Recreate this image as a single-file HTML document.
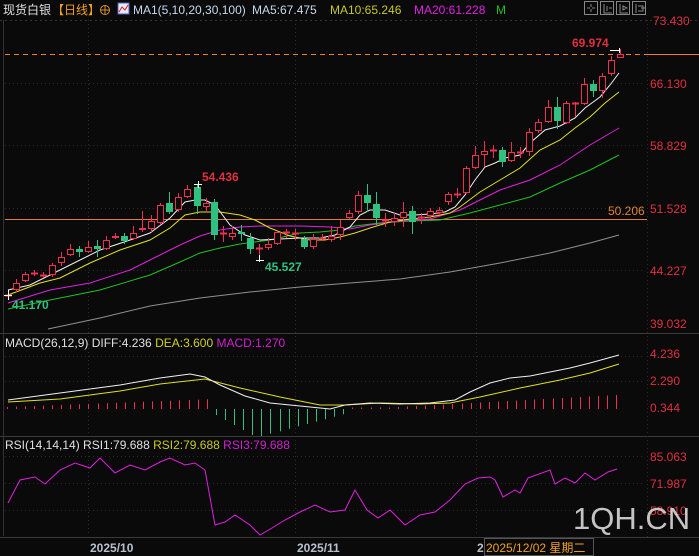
<!DOCTYPE html>
<html><head><meta charset="utf-8"><style>
html,body{margin:0;padding:0;background:#0a0a0a;width:699px;height:556px;overflow:hidden}
svg{display:block}
text{font-family:"Liberation Sans","Noto Sans CJK SC",sans-serif}
</style></head><body>
<svg id="s" width="699" height="556" viewBox="0 0 699 556" xmlns="http://www.w3.org/2000/svg">
<rect width="699" height="556" fill="#0a0a0a"/>
<!-- header -->
<text x="3" y="14" font-size="12" fill="#e0e0e0">现货白银</text>
<text x="52" y="14" font-size="12" fill="#f0a020">【日线】</text>
<circle cx="105" cy="10" r="4.5" fill="none" stroke="#d09030" stroke-width="1"/>
<line x1="100" y1="10" x2="110" y2="10" stroke="#d09030"/><line x1="105" y1="5" x2="105" y2="15" stroke="#d09030"/>
<rect x="118" y="3" width="11" height="11" fill="#e8e8f8" stroke="#5060c0"/>
<polyline points="119,12 122,7 125,10 128,5" fill="none" stroke="#d02020"/>
<text x="133" y="14" font-size="12" fill="#c8d8f0">MA1(5,10,20,30,100)</text>
<text x="252" y="14" font-size="12" fill="#c8d8f0">MA5:67.475</text>
<text x="330" y="14" font-size="12" fill="#c8c820">MA10:65.246</text>
<text x="414" y="14" font-size="12" fill="#e020e0">MA20:61.228</text>
<text x="496" y="14" font-size="12" fill="#20c020">M</text>
<g fill="none" stroke="#888" stroke-width="1">
<rect x="584.5" y="1.5" width="13" height="13"/><rect x="600.5" y="1.5" width="13" height="13"/><rect x="616.5" y="1.5" width="13" height="13"/><rect x="632.5" y="1.5" width="13" height="13"/>
<path d="M591 4v3M591 9v3M587 8h3M592 8h3M604 4v9h8M607 6v5M609 8h3M620 4v9h8M623 6l4 2-4 2zM636 4v9M638 6h5v5h-5M641 8h4"/>
</g>
<line x1="0" y1="20.5" x2="699" y2="20.5" stroke="#333" stroke-dasharray="2,3"/>
<!-- grid -->
<g stroke="#2c2c2c" stroke-dasharray="1,3">
<line x1="5" y1="83.5" x2="645" y2="83.5"/><line x1="5" y1="145.5" x2="645" y2="145.5"/><line x1="5" y1="208.5" x2="645" y2="208.5"/><line x1="5" y1="270.5" x2="645" y2="270.5"/>
<line x1="88.5" y1="20" x2="88.5" y2="536"/><line x1="295.5" y1="20" x2="295.5" y2="536"/><line x1="476.5" y1="20" x2="476.5" y2="536"/>
<line x1="5" y1="381.5" x2="645" y2="381.5"/><line x1="5" y1="356.5" x2="645" y2="356.5"/>
<line x1="5" y1="483.5" x2="645" y2="483.5"/><line x1="5" y1="510.5" x2="645" y2="510.5"/><line x1="5" y1="456.5" x2="645" y2="456.5"/>
</g>
<line x1="3.5" y1="20" x2="3.5" y2="536" stroke="#333"/>
<line x1="0" y1="333.5" x2="699" y2="333.5" stroke="#3a3a3a"/>
<line x1="0" y1="436.5" x2="699" y2="436.5" stroke="#3a3a3a"/>
<line x1="0" y1="537.5" x2="699" y2="537.5" stroke="#3a3a3a"/>
<line x1="647.5" y1="20" x2="647.5" y2="537" stroke="#2a2a2a" stroke-dasharray="1,3"/>
<!-- right labels -->
<g font-size="12" fill="#e03040">
<text x="653" y="25">73.430</text><text x="650" y="88">66.130</text><text x="650" y="150">58.829</text><text x="650" y="213">51.528</text><text x="650" y="275">44.227</text><text x="650" y="328">39.032</text>
<text x="650" y="358">4.236</text><text x="650" y="385">2.290</text><text x="650" y="412">0.344</text>
<text x="650" y="461">85.063</text><text x="650" y="488">71.987</text><text x="650" y="515">58.910</text>
</g>
<!-- ref lines -->
<line x1="5" y1="219.5" x2="647" y2="219.5" stroke="#e07a40"/>
<text x="608" y="215" font-size="12" fill="#e08040">50.206</text>
<line x1="5" y1="54.5" x2="645" y2="54.5" stroke="#f08020" stroke-dasharray="5,4"/>
<line x1="645" y1="54.5" x2="699" y2="54.5" stroke="#f08020"/>
<!-- MAs -->
<g fill="none" stroke-width="1">
<polyline stroke="#909090" points="48,329 100,318 150,306 200,298 250,292 300,287 350,283 400,279 450,272 500,263 550,253 590,243 619,235"/>
<polyline stroke="#20c020" points="8,309 50,300 100,290 150,275 180,262 200,253 220,248 240,244 270,240 300,233 320,232 340,230 355,226 380,223 410,221 440,220 470,213 500,205 530,197 560,183 590,170 619,155"/>
<polyline stroke="#e020e0" points="8,303 50,290 90,283 130,270 160,255 180,245 200,236 220,230 240,227 260,226 300,226 330,227 350,229 370,225 400,221 430,219 460,210 480,200 500,190 530,180 560,165 590,145 619,128"/>
<polyline stroke="#e0e020" points="8,295 40,283 60,278 90,263 120,250 150,240 170,228 185,215 200,212 220,212 240,215 255,220 270,228 290,236 310,240 325,240 340,237 355,233 370,228 390,222 410,219 430,217 450,213 460,207 480,192 500,180 520,168 540,150 560,140 575,128 590,117 605,103 619,92"/>
<polyline stroke="#f0f0f0" points="8,290 30,285 50,275 70,265 100,250 130,240 150,233 170,218 185,202 195,200 205,200 215,205 230,225 245,235 260,240 280,239 300,238 320,238 335,235 350,227 360,215 370,210 385,210 400,215 415,215 430,214 445,212 455,207 465,195 475,180 485,167 495,163 505,158 520,155 530,143 545,130 560,126 575,118 585,108 600,97 610,85 619,73"/>
</g>
<g id="candles"></g>
<text x="202" y="181" font-size="12" font-weight="bold" fill="#e03040">54.436</text>
<text x="265" y="271" font-size="12" font-weight="bold" fill="#30c080">45.527</text>
<text x="12" y="309" font-size="12" font-weight="bold" fill="#30c080">41.170</text>
<text x="572" y="47" font-size="12" font-weight="bold" fill="#e03040">69.974</text>
<line x1="610" y1="50.5" x2="620" y2="50.5" stroke="#fff"/><line x1="619.5" y1="48" x2="619.5" y2="53" stroke="#fff"/>
<line x1="194" y1="184.5" x2="202" y2="184.5" stroke="#fff"/><line x1="198.5" y1="181" x2="198.5" y2="188" stroke="#fff"/>
<line x1="256" y1="260.5" x2="264" y2="260.5" stroke="#fff"/><line x1="259.5" y1="255" x2="259.5" y2="262" stroke="#fff"/>
<line x1="4" y1="295.5" x2="12" y2="295.5" stroke="#fff"/><line x1="8.5" y1="290" x2="8.5" y2="300" stroke="#fff"/>
<!-- MACD -->
<text x="5" y="347" font-size="12" fill="#e0e0e0">MACD(26,12,9) <tspan fill="#e0e0e0">DIFF:4.236</tspan> <tspan fill="#d0d020">DEA:3.600</tspan> <tspan fill="#d020d0">MACD:1.270</tspan></text>
<g id="macd"></g>
<polyline fill="none" stroke="#e0e020" points="8,402 60,399 120,391 160,384 205,379 240,388 280,397 320,405 345,405 380,403 420,404 450,403 480,397 520,388 560,380 590,373 619,364"/>
<polyline fill="none" stroke="#f0f0f0" points="8,400 60,393 120,385 160,378 190,374 205,377 220,385 245,396 270,403 300,406 330,409 345,405 370,403 400,404 430,403 455,400 470,392 490,383 510,378 530,376 550,372 570,368 590,363 619,355"/>
<!-- RSI -->
<text x="5" y="449" font-size="12" fill="#e0e0e0">RSI(14,14,14) RSI1:79.688 <tspan fill="#c8c820">RSI2:79.688</tspan> <tspan fill="#d020d0">RSI3:79.688</tspan></text>
<polyline fill="none" stroke="#e020e0" points="8,503 20,480 35,477 45,484 60,470 75,463 90,468 100,458 115,473 130,465 145,470 160,462 170,458 185,465 195,463 205,470 215,525 225,522 235,515 250,525 260,535 272,528 285,520 300,512 315,505 330,512 345,510 355,490 367,510 378,518 390,510 405,525 420,515 435,512 450,500 465,484 478,478 490,477 495,480 503,497 515,490 520,493 528,478 550,470 555,484 565,478 575,483 585,473 595,480 608,472 617,469"/>
<text x="573" y="529" font-size="31" fill="#d8d8d8" fill-opacity="0.9">1QH.CN</text>
<!-- dates -->
<g font-size="12" font-weight="bold" fill="#b8c0d0"><text x="90" y="552">2025/10</text><text x="297" y="552">2025/11</text><text x="477" y="552">2</text></g>
<rect x="484.5" y="538.5" width="109" height="17" fill="#0a0a0a" stroke="#555"/>
<text x="486" y="552" font-size="12" fill="#f0a020">2025/12/02 星期二</text>
</svg>
<script>
var C=[[8,295,295,291,299],[16,290,283,279,292],[25,281,274,272,282],[34,273,273,270,276],[43,275,275,272,278],[52,275,265,263,277],[61,263,257,252,266],[70,255,249,244,256],[79,249,252,246,257],[88,252,247,241,253],[97,246,249,240,257],[106,249,240,236,250],[115,238,236,233,239],[124,236,241,233,244],[133,239,233,226,240],[142,230,228,211,232],[151,229,221,215,232],[160,223,205,203,224],[169,203,212,192,214],[178,210,197,193,212],[187,197,189,185,198],[197,187,206,184,214],[206,207,203,198,211],[214,202,235,199,240],[223,233,233,226,242],[232,237,233,226,240],[241,232,234,225,241],[250,238,249,233,254],[259,248,248,244,260],[268,248,244,238,250],[277,244,232,230,245],[286,232,232,229,238],[295,233,233,229,240],[304,239,247,236,249],[313,247,239,234,249],[322,238,238,234,241],[331,240,236,226,242],[340,235,227,220,240],[349,218,213,210,219],[358,212,195,191,214],[367,195,203,184,212],[376,204,218,192,225],[385,220,220,213,227],[394,222,218,213,226],[403,218,212,202,227],[412,211,222,206,234],[421,217,217,213,224],[430,216,211,208,219],[439,213,210,207,215],[448,202,194,192,205],[457,194,194,188,198],[466,193,168,166,194],[475,168,155,146,169],[484,155,151,141,167],[493,150,150,145,158],[502,150,162,147,167],[511,161,152,142,162],[520,152,152,147,158],[529,152,132,128,156],[538,131,122,119,133],[548,122,107,100,123],[557,107,121,97,129],[566,123,103,101,124],[575,103,103,102,117],[584,104,84,78,105],[593,84,91,80,97],[602,91,76,73,98],[611,74,60,56,76],[620,58,54,49,58]];
var ns="http://www.w3.org/2000/svg",g=document.getElementById("candles"),h="";
C.forEach(function(c){var x=c[0],o=c[1],cl=c[2],up=cl<o,col=(o==cl)?(up?"#f03050":"#f03050"):(up?"#f03050":"#30c080");
var green=cl>o;col=green?"#30c080":"#f03050";var t=Math.min(o,cl),b=Math.max(o,cl);
h+='<line x1="'+(x+.5)+'" y1="'+c[3]+'" x2="'+(x+.5)+'" y2="'+c[4]+'" stroke="'+col+'"/>';
if(b-t<2)h+='<line x1="'+(x-3)+'" y1="'+(t+.5)+'" x2="'+(x+4)+'" y2="'+(t+.5)+'" stroke="'+col+'" stroke-width="2"/>';
else if(green)h+='<rect x="'+(x-3)+'" y="'+t+'" width="7" height="'+(b-t)+'" fill="'+col+'"/>';
else h+='<rect x="'+(x-2.5)+'" y="'+(t+.5)+'" width="6" height="'+(b-t-1)+'" fill="#0a0a0a" stroke="'+col+'"/>';});
g.innerHTML=h;
var m=document.getElementById("macd"),s="";
for(var i=0;i<68;i++){var x=7+i*9.1,v;
if(i<23)v=2+i*0.35;else if(i<38){var k=i-23;v=-(k<5?6+k*5:Math.max(3,27-(k-5)*2.4));}
else if(i<43)v=1.5;else v=2+(i-43)*0.5;
if(i>=23&&i<38)s+='<line x1="'+(x|0)+'.5" y1="409" x2="'+(x|0)+'.5" y2="'+(409-v)+'" stroke="#30c080"/>';
else s+='<line x1="'+(x|0)+'.5" y1="409" x2="'+(x|0)+'.5" y2="'+(409-v)+'" stroke="#f03050"/>';}
m.innerHTML=s;
</script>
</body></html>
